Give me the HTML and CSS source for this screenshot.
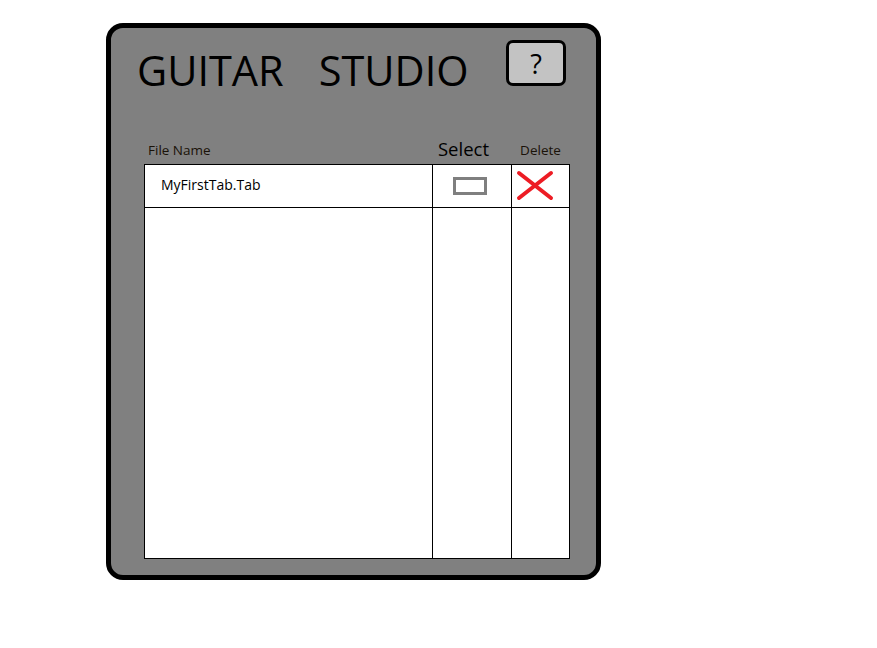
FILE: index.html
```html
<!DOCTYPE html>
<html>
<head>
<meta charset="utf-8">
<link rel="stylesheet" href="styles.css">
</head>
<body>
<div class="panel">
  <div class="top">
    <h1 class="title"><span>GUITAR</span><span>STUDIO</span></h1>
    <button class="help">?</button>
  </div>
  <div class="heads">
    <div class="h-name">File Name</div>
    <div class="h-select">Select</div>
    <div class="h-delete">Delete</div>
  </div>
  <div class="table">
    <div class="cell c-name r1">MyFirstTab.Tab</div>
    <div class="cell c-select r1"><span class="check"></span></div>
    <div class="cell c-delete r1">
      <svg class="x" width="40" height="32" viewBox="0 0 40 32">
        <line x1="4" y1="3" x2="36" y2="28" stroke="#ed1c24" stroke-width="4" stroke-linecap="round"/>
        <line x1="36" y1="3" x2="4" y2="28" stroke="#ed1c24" stroke-width="4" stroke-linecap="round"/>
      </svg>
    </div>
    <div class="cell c-name"></div>
    <div class="cell c-select"></div>
    <div class="cell c-delete"></div>
  </div>
</div>
</body>
</html>
```

FILE: styles.css
```css
html, body {
  margin: 0;
  padding: 0;
  background: #fff;
}
body {
  font-family: "Open Sans", "Liberation Sans", sans-serif;
  color: #000;
}
.panel {
  margin: 23px 0 0 106px;
  width: 495px;
  height: 557px;
  box-sizing: border-box;
  border: 5px solid #000;
  border-radius: 17px;
  background: #808080;
  padding: 12px 30px 16px 33px;
  display: flex;
  flex-direction: column;
}
.top {
  display: flex;
  justify-content: space-between;
  align-items: flex-start;
  height: 80px;
}
.title {
  margin: 10px 0 0 -7px;
  padding: 0;
  font-family: "Open Sans", sans-serif;
  font-weight: 400;
  font-size: 41.5px;
  line-height: 1;
  display: flex;
  gap: 35px;
}
.help {
  margin: 0;
  width: 60px;
  height: 46px;
  box-sizing: border-box;
  border: 3px solid #000;
  border-radius: 7px;
  background: #c3c3c3;
  font-family: "Open Sans", sans-serif;
  font-size: 27px;
  line-height: 1;
  padding: 0;
  color: #000;
}
.heads {
  display: grid;
  grid-template-columns: 288px 79px 59px;
  align-items: end;
  height: 44px;
  padding-bottom: 7px;
  box-sizing: border-box;
}
.h-name {
  font-size: 13.5px;
  line-height: 1;
  padding-left: 4px;
  color: #1a1208;
}
.h-select {
  font-size: 18.5px;
  line-height: 1;
  text-align: center;
  padding-right: 16px;
  margin-bottom: -1px;
}
.h-delete {
  font-size: 13.5px;
  line-height: 1;
  text-align: center;
  color: #1a1208;
}
.table {
  width: 426px;
  flex: 1;
  box-sizing: border-box;
  border: 1px solid #000;
  background: #fff;
  display: grid;
  grid-template-columns: 288px 79px 1fr;
  grid-template-rows: 43px 1fr;
}
.cell {
  box-sizing: border-box;
}
.c-name, .c-select {
  border-right: 1px solid #000;
}
.r1 {
  border-bottom: 1px solid #000;
}
.c-name.r1 {
  font-size: 14px;
  padding: 10px 0 0 16px;
}
.c-select.r1 {
  display: flex;
  justify-content: center;
  align-items: center;
}
.check {
  display: block;
  width: 34px;
  height: 18px;
  box-sizing: border-box;
  border: 3px solid #7f7f7f;
  margin-right: 5px;
}
.c-delete.r1 {
  display: flex;
  align-items: center;
  padding-left: 3px;
}
.x {
  display: block;
}
```
